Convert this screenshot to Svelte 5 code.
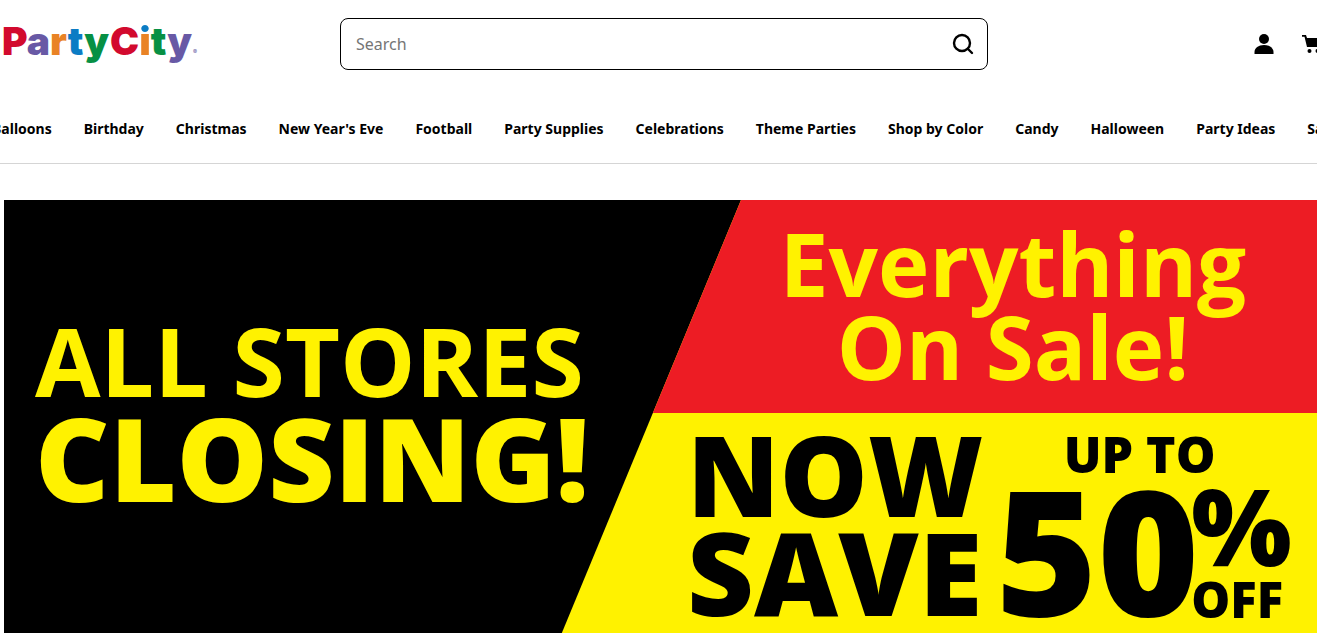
<script>
    const logo = [
        [['P', 'red'], ['a', 'purple'], ['r', 'orange'], ['t', 'blue'], ['y', 'green']],
        [['C', 'red'], ['i', 'dotted'], ['t', 'green'], ['y', 'purple']]
    ]
    const links = [
        'Balloons', 'Birthday', 'Christmas', "New Year's Eve", 'Football', 'Party Supplies', 'Celebrations',
        'Theme Parties', 'Shop by Color', 'Candy', 'Halloween', 'Party Ideas', 'Sale'
    ]
    let query = ''
</script>

<div class="viewport">
    <div class="page">
        <header>
            <div class="top">
                <a class="logo" href="/" aria-label="Party City">
                    {#each logo as word}
                        <span class="word">{#each word as [letter, color]}<span class={color}>{letter}</span>{/each}</span>
                    {/each}
                    <small>®</small>
                </a>
                <form class="search" on:submit|preventDefault>
                    <input type="text" placeholder="Search" aria-label="Search" bind:value={query}>
                    <button aria-label="Submit search">
                        <svg width="24" height="24" viewBox="0 0 24 24">
                            <circle cx="11" cy="11" r="8"></circle>
                            <line x1="17" y1="17" x2="21" y2="21"></line>
                        </svg>
                    </button>
                </form>
                <div class="actions">
                    <a href="/account" aria-label="Account">
                        <svg width="20" height="20" viewBox="0 0 20 20">
                            <circle cx="10" cy="5" r="5"></circle>
                            <path d="M0.500 20v-2c0-4 4-7 9.500-7s9.500 3 9.500 7v2z"></path>
                        </svg>
                    </a>
                    <a href="/cart" aria-label="Cart">
                        <svg width="20" height="20" viewBox="0 0 20 20">
                            <path d="M0 1h4l1 3h15l-3 9H5L2.500 2.800H0z"></path>
                            <circle cx="7.500" cy="17" r="2"></circle>
                            <circle cx="15.500" cy="17" r="2"></circle>
                        </svg>
                    </a>
                </div>
            </div>
            <nav>
                {#each links as link}
                    <a href="/{link.toLowerCase().replaceAll(' ', '-')}">{link}</a>
                {/each}
            </nav>
        </header>

        <main class="hero">
            <h1 class="closing">
                <span class="stores">ALL STORES</span>
                <span class="now-closing">CLOSING!</span>
            </h1>
            <div class="offers">
                <h2 class="everything">Everything<br>On Sale!</h2>
                <div class="discount">
                    <div class="save">
                        <span class="line-now">NOW</span>
                        <span class="line-save">SAVE</span>
                    </div>
                    <div class="amount">
                        <span class="up-to">UP TO</span>
                        <div class="value">
                            <span class="fifty">50</span>
                            <div class="unit">
                                <span class="percent">%</span>
                                <span class="off">OFF</span>
                            </div>
                        </div>
                    </div>
                </div>
            </div>
        </main>
    </div>
</div>

<style>
    :global(body) {
        margin: 0;
        background: #fff;
        color: #000;
        font-family: "Noto Sans", "Open Sans", sans-serif;
    }

    .viewport {
        overflow: hidden;
    }

    .page {
        margin-right: -11px;
    }

    header {
        border-bottom: 1px solid #d5d5d5;
    }

    .top {
        display: grid;
        grid-template-columns: 1fr minmax(0, 648px) 1fr;
        align-items: center;
        padding-top: 18px;
    }

    .logo {
        display: flex;
        gap: 1px;
        height: 52px;
        padding-left: 2px;
        font-family: Inter, sans-serif;
        font-size: 39px;
        font-weight: 900;
        line-height: 46px;
        text-decoration: none;
        white-space: nowrap;
    }

    .logo small {
        color: #63599f;
        font-size: 6px;
        font-weight: 400;
        line-height: 68px;
    }

    .red { color: #d20a2e; }
    .purple { color: #6859a5; }
    .orange { color: #e98325; }
    .blue { color: #0b7cc4; }
    .green { color: #079044; }

    .dotted {
        background: linear-gradient(#0b7cc4 32%, #e98325 32%);
        background-clip: text;
        color: transparent;
    }

    .search {
        display: flex;
        align-items: center;
        box-sizing: border-box;
        height: 52px;
        padding: 0 12px 0 15px;
        border: 1px solid #000;
        border-radius: 8px;
    }

    .search input {
        flex: 1;
        min-width: 0;
        padding: 0;
        border: none;
        outline: none;
        background: none;
        font-family: inherit;
        font-size: 16px;
    }

    .search input::placeholder {
        color: #757575;
    }

    .search button {
        display: flex;
        padding: 0;
        border: none;
        background: none;
        cursor: pointer;
    }

    .search svg {
        fill: none;
        stroke: #000;
        stroke-width: 2.4;
        stroke-linecap: round;
    }

    .actions {
        display: flex;
        justify-content: flex-end;
        gap: 28px;
        padding-right: 6px;
    }

    .actions a {
        display: flex;
        color: #000;
    }

    .actions svg {
        fill: currentColor;
    }

    nav {
        display: flex;
        justify-content: center;
        gap: 32px;
        padding: 48px 0 24px;
    }

    nav a {
        color: #000;
        font-size: 14px;
        font-weight: 700;
        line-height: 21px;
        text-decoration: none;
        white-space: nowrap;
    }

    .hero {
        display: flex;
        margin: 36px 0 0 4px;
        background: #000;
        font-family: "Open Sans", "Noto Sans", sans-serif;
        white-space: nowrap;
    }

    h1, h2 {
        margin: 0;
    }

    .closing {
        flex: 1;
        display: flex;
        flex-direction: column;
        min-width: 0;
        padding: 114px 0 0 31px;
        color: #fff200;
    }

    .stores {
        font-size: 95px;
        font-weight: 700;
        line-height: 92px;
    }

    .now-closing {
        font-size: 115px;
        font-weight: 800;
        line-height: 104px;
    }

    .offers {
        width: 767px;
        background: #fff200;
        clip-path: polygon(180px 0, 100% 0, 100% 100%, 0 100%);
    }

    .everything {
        padding: 22px 0 25px 137px;
        background: #ed1c24;
        color: #fff200;
        font-size: 87px;
        font-weight: 700;
        line-height: 83px;
        text-align: center;
    }

    .discount {
        display: flex;
        gap: 12px;
        padding: 13px 0 15px 126px;
        font-weight: 800;
    }

    .save, .amount, .unit {
        display: flex;
        flex-direction: column;
    }

    .line-now {
        font-size: 111px;
        line-height: 96px;
    }

    .line-save {
        font-size: 116px;
        line-height: 98px;
    }

    .up-to {
        padding-right: 8px;
        font-size: 50px;
        line-height: 56px;
        text-align: center;
    }

    .value {
        display: flex;
        height: 134px;
    }

    .fifty {
        font-size: 174px;
        line-height: 134px;
    }

    .unit {
        margin-left: -8px;
    }

    .percent {
        font-size: 106px;
        line-height: 86px;
    }

    .off {
        font-size: 49px;
        line-height: 62px;
    }
</style>
